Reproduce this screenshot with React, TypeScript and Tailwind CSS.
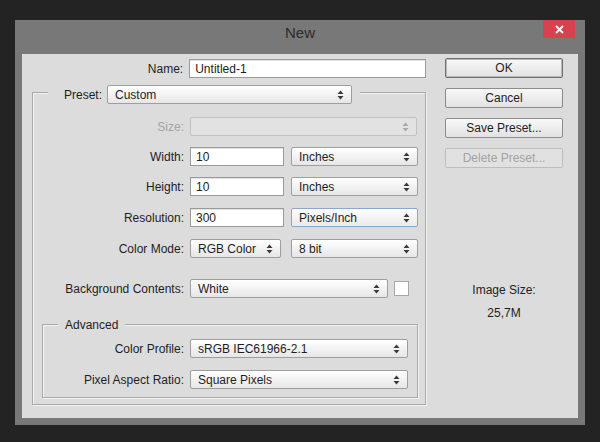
import React from 'react';

const font = { fontFamily: '"Liberation Sans", Arial, sans-serif' };

function Arrows({ disabled }: { disabled?: boolean }) {
  const c = disabled ? '#a8a8a8' : '#3a3a3a';
  return (
    <svg width="7" height="10" viewBox="0 0 7 10" className="absolute right-[7px] top-1/2 -translate-y-1/2">
      <path d="M3.5 0.5 L6.5 4 L0.5 4 Z" fill={c} />
      <path d="M0.5 6 L6.5 6 L3.5 9.5 Z" fill={c} />
    </svg>
  );
}

function Select({ value, w, disabled, focus }: { value?: string; w: string; disabled?: boolean; focus?: boolean }) {
  return (
    <div
      className={`relative h-[19px] ${w} flex items-center pl-[7px] rounded-[2px] border text-[12px] ${
        disabled
          ? 'border-[#c2c2c2] bg-[#e2e2e2] text-[#a0a0a0]'
          : focus
          ? 'border-[#8aa7cc] bg-gradient-to-b from-white to-[#e9e9e9] text-[#1e1e1e]'
          : 'border-[#9e9e9e] bg-gradient-to-b from-white to-[#e6e6e6] text-[#1e1e1e]'
      }`}
    >
      {value}
      <Arrows disabled={disabled} />
    </div>
  );
}

function Input({ value, w }: { value: string; w: string }) {
  return (
    <div className={`h-[19px] ${w} flex items-center pl-[5px] bg-white border border-[#9a9a9a] shadow-[inset_0_1px_0_#e4e4e4] text-[12px] text-[#1e1e1e]`}>
      {value}
    </div>
  );
}

function Row({ label, lw, children, className = '', dim }: { label: string; lw: string; children: React.ReactNode; className?: string; dim?: boolean }) {
  return (
    <div className={`flex items-center h-[19px] ${className}`}>
      <div className={`${lw} shrink-0 text-right pr-[6px] text-[12px] ${dim ? 'text-[#a4a4a4]' : 'text-[#1e1e1e]'}`}>{label}</div>
      {children}
    </div>
  );
}

function Btn({ label, className = '', variant = 'normal' }: { label: string; className?: string; variant?: 'normal' | 'default' | 'disabled' }) {
  const v =
    variant === 'default'
      ? 'border-[#6f6f6f] shadow-[inset_0_0_0_1px_#b8b8b8] bg-gradient-to-b from-[#f8f8f8] to-[#e2e2e2] text-[#1e1e1e]'
      : variant === 'disabled'
      ? 'border-[#bdbdbd] bg-[#e1e1e1] text-[#a2a2a2]'
      : 'border-[#8c8c8c] bg-gradient-to-b from-[#f8f8f8] to-[#e2e2e2] text-[#1e1e1e]';
  return (
    <div className={`h-[20px] w-full flex items-center justify-center rounded-[2px] border text-[12px] ${v} ${className}`}>
      {label}
    </div>
  );
}

export default function App() {
  return (
    <div className="w-[600px] h-[442px] bg-[#232323] pt-[20px] pl-[15px]" style={font}>
      <div className="w-[570px] h-[405px] bg-[#787878] flex flex-col">
        {/* Title bar */}
        <div className="relative h-[34px] shrink-0 flex justify-center pt-[4px]">
          <span className="text-[15px] leading-[18px] text-[#2c2c2c]">New</span>
          <div className="absolute top-0 right-[10px] w-[32px] h-[18px] bg-[#d8424f] flex items-center justify-center">
            <svg width="9" height="9" viewBox="0 0 9 9">
              <path d="M1 1 L8 8 M8 1 L1 8" stroke="#fff" strokeWidth="1.8" />
            </svg>
          </div>
        </div>

        {/* Client area */}
        <div className="mx-[7px] h-[364px] bg-[#dcdcdc] flex pl-[10px] pt-[4px]">
          {/* Left */}
          <div className="w-[394px] shrink-0 flex flex-col">
            <div className="flex items-center h-[19px] mt-[1px]">
              <div className="w-[158px] text-right pr-[6px] text-[12px] text-[#1e1e1e]">Name:</div>
              <Input value="Untitled-1" w="w-[238px]" />
            </div>

            <div className="mt-[14px] h-[313px] border border-[#a9a9a9] shadow-[inset_1px_1px_0_#f3f3f3,1px_1px_0_#f3f3f3] flex flex-col">
              <div className="-mt-[8px] ml-[15px] w-fit bg-[#dcdcdc] flex items-center pl-[16px] pr-[8px]">
                <span className="text-[12px] text-[#1e1e1e] pr-[5px]">Preset:</span>
                <Select value="Custom" w="w-[245px]" />
              </div>

              <Row label="Size:" lw="w-[157px]" className="mt-[13px]" dim>
                <Select w="w-[227px]" disabled />
              </Row>
              <Row label="Width:" lw="w-[157px]" className="mt-[11px]">
                <Input value="10" w="w-[94px]" />
                <div className="ml-[7px]"><Select value="Inches" w="w-[127px]" /></div>
              </Row>
              <Row label="Height:" lw="w-[157px]" className="mt-[11px]">
                <Input value="10" w="w-[94px]" />
                <div className="ml-[7px]"><Select value="Inches" w="w-[127px]" /></div>
              </Row>
              <Row label="Resolution:" lw="w-[157px]" className="mt-[12px]">
                <Input value="300" w="w-[94px]" />
                <div className="ml-[7px]"><Select value="Pixels/Inch" w="w-[127px]" focus /></div>
              </Row>
              <Row label="Color Mode:" lw="w-[157px]" className="mt-[12px]">
                <Select value="RGB Color" w="w-[91px]" />
                <div className="ml-[10px]"><Select value="8 bit" w="w-[127px]" /></div>
              </Row>
              <Row label="Background Contents:" lw="w-[157px]" className="mt-[21px]">
                <Select value="White" w="w-[198px]" />
                <div className="ml-[6px] w-[15px] h-[15px] bg-white border border-[#a8a8a8]" />
              </Row>

              {/* Advanced */}
              <div className="mt-[26px] ml-[9px] w-[376px] h-[74px] border border-[#a9a9a9] shadow-[inset_1px_1px_0_#f3f3f3,1px_1px_0_#f3f3f3] flex flex-col">
                <div className="-mt-[8px] ml-[15px] w-fit h-[16px] bg-[#dcdcdc] px-[7px] flex items-center text-[12px] text-[#1e1e1e]">
                  Advanced
                </div>
                <Row label="Color Profile:" lw="w-[147px]" className="mt-[6px]">
                  <Select value="sRGB IEC61966-2.1" w="w-[218px]" />
                </Row>
                <Row label="Pixel Aspect Ratio:" lw="w-[147px]" className="mt-[12px]">
                  <Select value="Square Pixels" w="w-[218px]" />
                </Row>
              </div>
            </div>
          </div>

          {/* Right */}
          <div className="ml-[19px] w-[118px] flex flex-col items-center">
            <Btn label="OK" variant="default" />
            <Btn label="Cancel" className="mt-[10px]" />
            <Btn label="Save Preset..." className="mt-[10px]" />
            <Btn label="Delete Preset..." className="mt-[10px]" variant="disabled" />
            <div className="mt-[113px] text-[12px] text-[#1e1e1e]">Image Size:</div>
            <div className="mt-[5px] text-[12px] text-[#1e1e1e]">25,7M</div>
          </div>
        </div>
      </div>
    </div>
  );
}
